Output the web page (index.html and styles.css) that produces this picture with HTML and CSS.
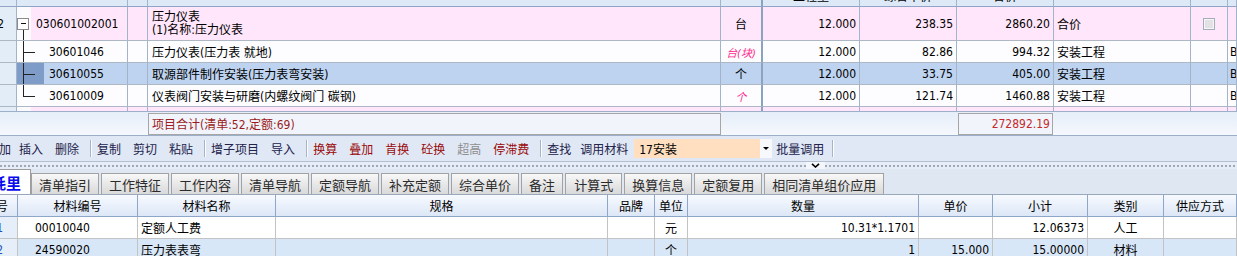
FILE: index.html
```html
<!DOCTYPE html>
<html lang="zh-CN">
<head>
    <meta charset="UTF-8">
    <title>分部分项</title>
    <link rel="stylesheet" href="styles.css">
</head>
<body>
    <div class="top-grid">
        <div class="row head">
            <div class="cell c0"></div>
            <div class="cell"></div>
            <div class="cell"></div>
            <div class="cell"></div>
            <div class="cell unit"></div>
            <div class="cell">工程量</div>
            <div class="cell">综合单价</div>
            <div class="cell">合价</div>
            <div class="cell"></div>
            <div class="cell"></div>
            <div class="cell"></div>
        </div>
        <div class="row bill">
            <div class="cell c0 num">52</div>
            <div class="cell code"><span class="tree-root"><span class="expander"></span></span><span class="code-text">030601002001</span></div>
            <div class="cell"></div>
            <div class="cell name two-line"><span>压力仪表</span><span>(1)名称:压力仪表</span></div>
            <div class="cell unit">台</div>
            <div class="cell num">12.000</div>
            <div class="cell num">238.35</div>
            <div class="cell num">2860.20</div>
            <div class="cell cat">合价</div>
            <div class="cell chk-cell"><span class="chk"></span></div>
            <div class="cell"></div>
        </div>
        <div class="row item">
            <div class="cell c0"></div>
            <div class="cell code"><span class="tree t"></span><span class="code-text">30601046</span></div>
            <div class="cell"></div>
            <div class="cell name">压力仪表(压力表 就地)</div>
            <div class="cell unit"><span class="unit-alt">台(块)</span></div>
            <div class="cell num">12.000</div>
            <div class="cell num">82.86</div>
            <div class="cell num">994.32</div>
            <div class="cell cat">安装工程</div>
            <div class="cell"></div>
            <div class="cell last">B</div>
        </div>
        <div class="row item selected">
            <div class="cell c0"></div>
            <div class="cell code"><span class="tree t dark"></span><span class="code-text">30610055</span></div>
            <div class="cell"></div>
            <div class="cell name">取源部件制作安装(压力表弯安装)</div>
            <div class="cell unit">个</div>
            <div class="cell num">12.000</div>
            <div class="cell num">33.75</div>
            <div class="cell num">405.00</div>
            <div class="cell cat">安装工程</div>
            <div class="cell"></div>
            <div class="cell last">B</div>
        </div>
        <div class="row item">
            <div class="cell c0"></div>
            <div class="cell code"><span class="tree l"></span><span class="code-text">30610009</span></div>
            <div class="cell"></div>
            <div class="cell name">仪表阀门安装与研磨(内螺纹阀门 碳钢)</div>
            <div class="cell unit"><span class="unit-alt">个</span></div>
            <div class="cell num">12.000</div>
            <div class="cell num">121.74</div>
            <div class="cell num">1460.88</div>
            <div class="cell cat">安装工程</div>
            <div class="cell"></div>
            <div class="cell last">B</div>
        </div>
        <div class="row bill">
            <div class="cell c0"></div>
            <div class="cell code"><span class="tree-root plain"></span></div>
            <div class="cell"></div>
            <div class="cell"></div>
            <div class="cell unit"></div>
            <div class="cell"></div>
            <div class="cell"></div>
            <div class="cell"></div>
            <div class="cell"></div>
            <div class="cell"></div>
            <div class="cell"></div>
        </div>
    </div>

    <div class="summary">
        <div class="sum-box sum-label">项目合计(清单:52,定额:69)</div>
        <div class="sum-box sum-total">272892.19</div>
    </div>

    <div class="toolbar">
        <span class="tb-btn tb-first">添加</span>
        <span class="tb-btn">插入</span>
        <span class="tb-btn">删除</span>
        <span class="tb-sep"></span>
        <span class="tb-btn">复制</span>
        <span class="tb-btn">剪切</span>
        <span class="tb-btn">粘贴</span>
        <span class="tb-sep"></span>
        <span class="tb-btn">增子项目</span>
        <span class="tb-btn">导入</span>
        <span class="tb-sep"></span>
        <span class="tb-btn red">换算</span>
        <span class="tb-btn red">叠加</span>
        <span class="tb-btn red">肯换</span>
        <span class="tb-btn red">砼换</span>
        <span class="tb-btn gray">超高</span>
        <span class="tb-btn red">停滞费</span>
        <span class="tb-sep"></span>
        <span class="tb-btn">查找</span>
        <span class="tb-label">调用材料</span>
        <div class="combo">
            <span class="combo-text">17安装</span>
            <span class="combo-arrow"><span class="tri"></span></span>
        </div>
        <span class="tb-btn tb-narrow">批量调用</span>
        <span class="tb-sep"></span>
    </div>

    <div class="splitter">
        <span class="grip grip-left"></span>
        <span class="chev">
            <svg width="9" height="5" viewBox="0 0 9 5"><polyline points="1,0.8 4.5,4 8,0.8" fill="none" stroke="#000" stroke-width="1.6"/></svg>
        </span>
        <span class="grip"></span>
    </div>

    <div class="tabs">
        <div class="tab-active">耗里</div>
        <div class="tab">清单指引</div>
        <div class="tab">工作特征</div>
        <div class="tab">工作内容</div>
        <div class="tab">清单导航</div>
        <div class="tab">定额导航</div>
        <div class="tab">补充定额</div>
        <div class="tab">综合单价</div>
        <div class="tab">备注</div>
        <div class="tab wide">计算式</div>
        <div class="tab">换算信息</div>
        <div class="tab">定额复用</div>
        <div class="tab">相同清单组价应用</div>
    </div>

    <div class="bot-grid">
        <div class="row head">
            <div class="cell c0 end">序号</div>
            <div class="cell">材料编号</div>
            <div class="cell">材料名称</div>
            <div class="cell">规格</div>
            <div class="cell">品牌</div>
            <div class="cell">单位</div>
            <div class="cell">数量</div>
            <div class="cell">单价</div>
            <div class="cell">小计</div>
            <div class="cell">类别</div>
            <div class="cell">供应方式</div>
        </div>
        <div class="row">
            <div class="cell c0 end">1</div>
            <div class="cell mcode">00010040</div>
            <div class="cell text">定额人工费</div>
            <div class="cell"></div>
            <div class="cell"></div>
            <div class="cell mid">元</div>
            <div class="cell num">10.31*1.1701</div>
            <div class="cell num"></div>
            <div class="cell num">12.06373</div>
            <div class="cell mid">人工</div>
            <div class="cell"></div>
        </div>
        <div class="row alt">
            <div class="cell c0 end">2</div>
            <div class="cell mcode">24590020</div>
            <div class="cell text">压力表表弯</div>
            <div class="cell"></div>
            <div class="cell"></div>
            <div class="cell mid">个</div>
            <div class="cell num">1</div>
            <div class="cell num">15.000</div>
            <div class="cell num">15.00000</div>
            <div class="cell mid">材料</div>
            <div class="cell"></div>
        </div>
    </div>
</body>
</html>
```

FILE: styles.css
```css
* {
    box-sizing: border-box;
}
body {
    margin: 0;
    width: 1237px;
    height: 256px;
    overflow: hidden;
    font-family: "DejaVu Sans Condensed", "Liberation Sans", "Noto Sans CJK SC", sans-serif;
    font-size: 12px;
    color: #000;
    background-color: #e1e9f5;
}

/* upper grid */
.top-grid {
    height: 111px;
    overflow: hidden;
    background-color: #fdfdff;
}
.top-grid .row {
    display: grid;
    grid-template-columns: 17px 111px 20px 573px 42px 97px 97px 97px 137px 37px 1fr;
    height: 22px;
}
.top-grid .cell {
    display: flex;
    align-items: center;
    overflow: hidden;
    white-space: nowrap;
    border-right: 1px solid #a2b4ca;
    border-bottom: 1px solid #aeb8c5;
}
.top-grid .c0 {
    background-color: #e3edf8;
}
.top-grid .unit {
    justify-content: center;
    border-right: 2px solid #8ba2c1;
}
.top-grid .head {
    margin-top: -15px;
}
.top-grid .head .cell {
    justify-content: center;
    background-color: #dde9f6;
    border-bottom-color: #8fa5c3;
}
.top-grid .bill {
    height: 34px;
}
.top-grid .bill .cell {
    background-color: #ffe6fa;
}
.top-grid .bill .c0 {
    background-color: #e3edf8;
}
.top-grid .selected .cell {
    background-color: #bdd3f0;
}
.top-grid .selected .c0 {
    background-color: #e3edf8;
}
.top-grid .num {
    justify-content: flex-end;
    padding-right: 3px;
}
.top-grid .c0.num {
    padding-right: 12px;
}
.top-grid .cat {
    padding-left: 3px;
}
.top-grid .name {
    padding-left: 4px;
}
.top-grid .two-line {
    flex-direction: column;
    align-items: flex-start;
    justify-content: center;
    line-height: 13px;
}
.top-grid .last {
    padding-left: 2px;
}

.code-text {
    padding-left: 5px;
}
.tree-root {
    align-self: stretch;
    width: 14px;
    display: flex;
    align-items: center;
    background: linear-gradient(#222, #222) 6px 100% / 1px 10px no-repeat, #fbfbfe;
}
.tree-root.plain {
    background: #fbfbfe;
}
.expander {
    width: 12px;
    height: 12px;
    border: 1px solid #8a8a8a;
    background: linear-gradient(#111, #111) center / 5px 1px no-repeat, #fff;
}
.tree {
    align-self: stretch;
    width: 27px;
}
.tree.t {
    background:
        linear-gradient(#222, #222) 6px 0 / 1px 100% no-repeat,
        linear-gradient(#222, #222) 6px 11px / 12px 1px no-repeat;
}
.tree.l {
    background:
        linear-gradient(#222, #222) 6px 0 / 1px 12px no-repeat,
        linear-gradient(#222, #222) 6px 11px / 12px 1px no-repeat;
}
.tree.dark {
    background-color: #7f9bc7;
}
.unit-alt {
    color: #ff2a8c;
    font-style: italic;
    font-size: 11px;
}
.chk-cell {
    justify-content: center;
}
.chk {
    width: 12px;
    height: 12px;
    border: 1px solid #a3acba;
    background-color: #e2e2e4;
    box-shadow: inset 0 0 0 1px #f6f6f6;
}

/* totals */
.summary {
    height: 25px;
    display: flex;
    align-items: center;
    padding-left: 148px;
    border-top: 1px solid #9cb0ca;
    border-bottom: 1px solid #9cb0ca;
    background: linear-gradient(#e6eef9, #f5f8fd);
}
.sum-box {
    height: 22px;
    display: flex;
    align-items: center;
    border: 1px solid #a6a6a6;
    background-color: #f1f5fb;
}
.sum-label {
    width: 573px;
    padding-left: 3px;
    color: #9a1b1b;
}
.sum-total {
    width: 95px;
    margin-left: 237px;
    justify-content: flex-end;
    padding-right: 2px;
    color: #c42a2a;
}

/* toolbar */
.toolbar {
    height: 25px;
    display: flex;
    align-items: center;
    background-color: #e0e8f5;
    color: #22224a;
    white-space: nowrap;
}
.tb-btn {
    padding: 0 6px;
}
.tb-first {
    margin-left: -13px;
    padding: 0 2px 0 0;
}
.tb-narrow {
    padding: 0 4px;
}
.tb-btn.red {
    color: #9a0a0a;
}
.tb-btn.gray {
    color: #8e8e8e;
}
.tb-sep {
    width: 1px;
    height: 17px;
    margin-left: 5px;
    background-color: #a8b3c5;
    box-shadow: 1px 0 #fbfdff;
}
.tb-narrow + .tb-sep {
    margin-left: 4px;
}
.tb-label {
    padding: 0 3px;
}
.combo {
    display: flex;
    width: 138px;
    height: 19px;
    margin-left: 3px;
}
.combo-text {
    flex: 1;
    display: flex;
    align-items: center;
    padding-left: 5px;
    background-color: #ffdfbf;
    color: #000;
}
.combo-arrow {
    width: 12px;
    display: flex;
    align-items: center;
    justify-content: center;
    background-color: #f6f8fb;
}
.tri {
    width: 0;
    height: 0;
    border-left: 3px solid transparent;
    border-right: 3px solid transparent;
    border-top: 3px solid #000;
}

/* splitter */
.splitter {
    height: 8px;
    display: flex;
    align-items: center;
    border-top: 1px solid #b3bfd1;
    background-color: #e6edf7;
}
.grip {
    flex: 1;
    height: 2px;
    background: repeating-linear-gradient(90deg, #9ea8b9 0 2px, transparent 2px 4px);
}
.grip-left {
    flex: 0 0 806px;
}
.chev {
    width: 19px;
    height: 7px;
    display: flex;
    align-items: center;
    justify-content: center;
    background-color: #f3f6fb;
}
.chev svg {
    display: block;
}

/* tabs */
.tabs {
    height: 26px;
    display: flex;
    align-items: flex-end;
    background-color: #dfe7f3;
    border-bottom: 1px solid #9aa8bc;
    white-space: nowrap;
}
.tab-active {
    width: 31px;
    height: 25px;
    display: flex;
    align-items: center;
    justify-content: flex-end;
    padding-right: 9px;
    overflow: hidden;
    background-color: #fff;
    border-top: 1px solid #9c9c9c;
    border-right: 1px solid #9c9c9c;
    color: #0a0aee;
    font-size: 15px;
    font-weight: bold;
}
.tab {
    height: 21px;
    display: flex;
    align-items: center;
    padding: 0 7px;
    border: 1px solid #a2a2a2;
    border-bottom: none;
    background: linear-gradient(#f8f8f8, #d9d9d9);
    color: #2b2b2b;
    font-size: 13px;
}
.tab + .tab {
    margin-left: 2px;
}
.tab.wide {
    padding: 0 8px;
}

/* lower grid */
.bot-grid .row {
    display: grid;
    grid-template-columns: 18px 120px 138px 332px 47px 33px 231px 74px 95px 76px 1fr;
    height: 22px;
    background-color: #fff;
}
.bot-grid .cell {
    display: flex;
    align-items: center;
    overflow: hidden;
    white-space: nowrap;
    border-right: 1px solid #c3c3c3;
    border-bottom: 1px solid #c3c3c3;
}
.bot-grid .head {
    background: linear-gradient(#f7faff, #dbe6f6);
}
.bot-grid .head .cell {
    justify-content: center;
    border-right-color: #8ea7c8;
    border-bottom-color: #8ea7c8;
}
.bot-grid .row.alt {
    background-color: #d8e7f8;
}
.bot-grid .c0 {
    background-color: #e5eef9;
    color: #2052c4;
}
.bot-grid .head .c0 {
    color: #000;
    background: transparent;
}
.bot-grid .head .c0.end {
    justify-content: flex-end;
    padding-right: 9px;
}
.bot-grid .c0.end {
    justify-content: flex-end;
    padding-right: 14px;
}
.bot-grid .mcode {
    padding-left: 17px;
}
.bot-grid .text {
    padding-left: 3px;
}
.bot-grid .num {
    justify-content: flex-end;
    padding-right: 3px;
}
.bot-grid .mid {
    justify-content: center;
}
```
